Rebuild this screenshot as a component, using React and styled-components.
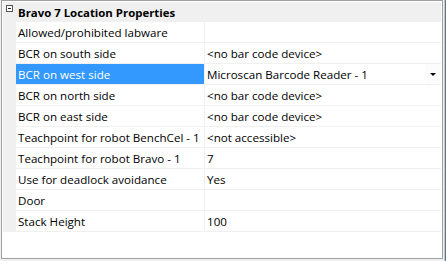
import React from 'react';
import styled, { createGlobalStyle } from 'styled-components';

const GlobalStyle = createGlobalStyle`
  html, body {
    margin: 0;
    padding: 0;
    background: #f0f0f0;
  }
  body {
    font-family: 'Open Sans', 'Noto Sans', sans-serif;
  }
`;

const Screen = styled.div`
  display: flex;
  width: 446px;
  height: 261px;
  background: #f0f0f0;
`;

const Frame = styled.div`
  box-sizing: border-box;
  margin-left: 1px;
  width: 442px;
  height: 259px;
  border: 1px solid #a0a0a0;
  padding: 1px;
  background: #fff;
  display: flex;
  flex-direction: column;
`;

const EdgeStrip = styled.div`
  margin-left: 1px;
  width: 2px;
  height: 261px;
  background: linear-gradient(to right, #e9c38e 0 1px, #3a7fc4 1px 2px);
`;

const Header = styled.div`
  display: flex;
  align-items: center;
  height: 20px;
  background: #f0f0f0;
  font-size: 11.4px;
  font-weight: 700;
  color: #000;
`;

const Toggle = styled.div`
  width: 13px;
  display: flex;
  justify-content: center;
  align-items: flex-start;
  align-self: stretch;
  padding-top: 3px;
  box-sizing: border-box;
`;

const ToggleBox = styled.span`
  box-sizing: border-box;
  width: 7px;
  height: 7px;
  border: 1px solid #555;
  background: #fff;
  display: flex;
  align-items: center;
  justify-content: center;

  &::after {
    content: '';
    width: 3px;
    height: 1px;
    background: #222;
  }
`;

const Title = styled.span`
  padding-left: 2px;
`;

const Body = styled.div`
  display: flex;
`;

const Gutter = styled.div`
  width: 13px;
  height: 210px;
  background: #f0f0f0;
`;

const Rows = styled.div`
  flex: 1;
  display: flex;
  flex-direction: column;
`;

const Row = styled.div`
  display: grid;
  grid-template-columns: 188px 1px 1fr;
  height: 21px;
  box-sizing: border-box;
  border-bottom: 1px solid #f0f0f0;
  font-size: 11.6px;
  color: #000;
`;

const NameCell = styled.div`
  display: flex;
  align-items: center;
  padding-left: 2px;
  white-space: nowrap;
  background: ${(p) => (p.$selected ? '#3399ff' : '#fff')};
  color: ${(p) => (p.$selected ? '#fff' : '#000')};
`;

const Divider = styled.div`
  background: #f0f0f0;
`;

const ValueCell = styled.div`
  display: flex;
  align-items: center;
  padding-left: 2px;
  white-space: nowrap;
`;

const ValueText = styled.span`
  flex: 1;
`;

const DropButton = styled.div`
  width: 16px;
  align-self: stretch;
  display: flex;
  align-items: center;
  justify-content: center;
  background: #fcfcfc;

  &::after {
    content: '';
    border-left: 3px solid transparent;
    border-right: 3px solid transparent;
    border-top: 3px solid #000;
  }
`;

const rows = [
  { name: 'Allowed/prohibited labware', value: '' },
  { name: 'BCR on south side', value: '<no bar code device>' },
  { name: 'BCR on west side', value: 'Microscan Barcode Reader - 1', selected: true },
  { name: 'BCR on north side', value: '<no bar code device>' },
  { name: 'BCR on east side', value: '<no bar code device>' },
  { name: 'Teachpoint for robot BenchCel - 1', value: '<not accessible>' },
  { name: 'Teachpoint for robot Bravo - 1', value: '7' },
  { name: 'Use for deadlock avoidance', value: 'Yes' },
  { name: 'Door', value: '' },
  { name: 'Stack Height', value: '100' },
];

export default function App() {
  return (
    <>
      <GlobalStyle />
      <Screen>
        <Frame>
          <Header>
            <Toggle>
              <ToggleBox />
            </Toggle>
            <Title>Bravo 7 Location Properties</Title>
          </Header>
          <Body>
            <Gutter />
            <Rows>
              {rows.map((r) => (
                <Row key={r.name}>
                  <NameCell $selected={r.selected}>{r.name}</NameCell>
                  <Divider />
                  <ValueCell>
                    <ValueText>{r.value}</ValueText>
                    {r.selected && <DropButton />}
                  </ValueCell>
                </Row>
              ))}
            </Rows>
          </Body>
        </Frame>
        <EdgeStrip />
      </Screen>
    </>
  );
}
